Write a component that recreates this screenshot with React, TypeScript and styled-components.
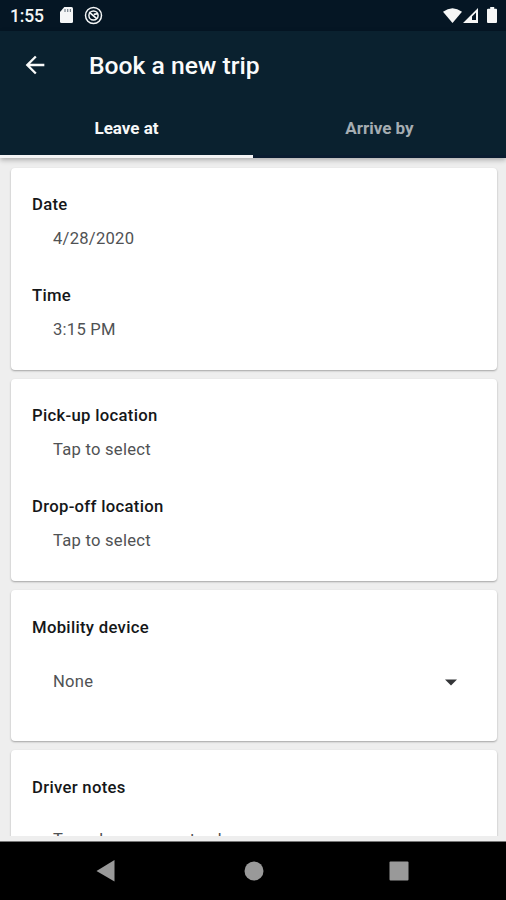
import React from "react";
import styled, { createGlobalStyle } from "styled-components";

const GlobalStyle = createGlobalStyle`
  * { box-sizing: border-box; }
  body { margin: 0; background: #eee; font-family: Roboto, sans-serif; }
`;
const Screen = styled.div`
  width: 506px;
  height: 900px;
  display: flex;
  flex-direction: column;
  overflow: hidden;
  background: #eeeeee;
`;
const StatusBar = styled.div`
  height: 31px;
  flex: none;
  display: flex;
  align-items: center;
  justify-content: space-between;
  padding: 0 8px 0 10px;
  background: #051624;
  color: #f4f6f7;
`;
const StatusGroup = styled.div`
  display: flex;
  align-items: center;
  gap: 10px;
`;
const Clock = styled.span`
  width: 39px;
  font-size: 17.5px;
  line-height: 31px;
  font-weight: 500;
  letter-spacing: -0.2px;
  padding-top: 1px;
`;
const Header = styled.header`
  height: 127px;
  flex: none;
  display: flex;
  flex-direction: column;
  background: #0a212f;
  box-shadow: 0 2px 5px rgba(0, 0, 0, 0.28);
  z-index: 1;
`;
const TitleBar = styled.div`
  height: 70px;
  display: flex;
  align-items: center;
  padding: 0 0 2px 21px;
`;
const BackButton = styled.button`
  display: flex;
  width: 68px;
  padding: 0;
  border: 0;
  background: none;
`;
const Title = styled.h1`
  margin: 0;
  padding-top: 1px;
  color: #fafbfb;
  font-size: 24.7px;
  line-height: 30px;
  font-weight: 500;
`;
const Tabs = styled.nav`
  flex: 1;
  display: flex;
`;
const Tab = styled.button<{ $active?: boolean }>`
  flex: 1;
  padding: 0;
  border: 0;
  border-bottom: 3px solid ${(p) => (p.$active ? "#f4f4f5" : "#0a1c30")};
  background: none;
  color: ${(p) => (p.$active ? "#f7f8f8" : "#a5adb2")};
  font: 700 17px/20px Roboto, sans-serif;
`;
const Content = styled.main`
  flex: 1;
  min-height: 0;
  margin-bottom: 5px;
  padding: 10px 9px 0 11px;
  display: flex;
  flex-direction: column;
  gap: 9px;
  overflow: hidden;
`;
const Card = styled.section<{ $height: number }>`
  height: ${(p) => p.$height}px;
  flex: none;
  padding: 25px 21px;
  border-radius: 4px;
  background: #fff;
  box-shadow: 0 1px 2px rgba(0, 0, 0, 0.32);
`;
const Field = styled.div`
  height: 91px;
`;
const Label = styled.div<{ $offset?: number }>`
  padding-top: ${(p) => p.$offset ?? 1}px;
  font-size: 16.7px;
  line-height: 22px;
  font-weight: 500;
  letter-spacing: 0.3px;
  color: #151719;
`;
const Value = styled.div<{ $gap?: number }>`
  display: flex;
  align-items: center;
  justify-content: space-between;
  margin-top: ${(p) => p.$gap ?? 12}px;
  padding: 0 19px 0 21px;
  font-size: 16.6px;
  line-height: 22px;
  letter-spacing: 0.25px;
  white-space: nowrap;
  color: #505254;
`;
const NavBar = styled.footer`
  height: 59px;
  flex: none;
  display: flex;
  align-items: center;
  justify-content: space-between;
  padding: 0 97px 0 96px;
  border-top: 1px solid #777;
  background: #000;
`;
const HomeButton = styled.span`
  display: flex;
  padding-left: 3px;
`;

const SdCard = () => (
  <svg width="15" height="17" viewBox="0 0 15 17">
    <path fill="#f4f6f7" d="M5.3 0h7.2Q14 0 14 1.5v13q0 1.5-1.5 1.5h-10Q1 16 1 14.5V5z" />
    <path stroke="#76818a" strokeWidth="1.2" d="M6 2v3M8.7 2v3M11.4 2v3" />
  </svg>
);
const NoSync = () => (
  <svg width="19" height="19" viewBox="0 0 19 19" fill="none" stroke="#f4f6f7">
    <circle cx="9.5" cy="9.5" r="8" strokeWidth="1.5" />
    <circle cx="9.5" cy="9.5" r="4.6" strokeWidth="1.5" />
    <path strokeWidth="1.7" d="M5.2 6.2l7.8 6.6M9.8 8.3l4.2-.6" />
  </svg>
);

export default function App() {
  return (
    <>
      <GlobalStyle />
      <Screen>
        <StatusBar>
          <StatusGroup>
            <Clock>1:55</Clock>
            <SdCard />
            <NoSync />
          </StatusGroup>
          <svg width="56" height="20" viewBox="0 0 56 20" fill="#f6f7f7">
            <path d="M1 5.8Q10.5-1.2 20 5.8L10.5 17z" />
            <path fillRule="evenodd" d="M21 17L36 2v15zM30 14h4V6.5l-4 4.1z" />
            <path d="M46.2 2.8h2V1h4v1.8h2Q55 2.8 55 3.8v12.3q0 1-1 1h-8q-1 0-1-1V3.8q0-1 1.2-1z" />
          </svg>
        </StatusBar>
        <Header>
          <TitleBar>
            <BackButton aria-label="Back">
              <svg width="28" height="28" viewBox="0 0 24 24" fill="#f8f9f9">
                <path d="M20 11H7.83l5.59-5.59L12 4l-8 8 8 8 1.41-1.41L7.83 13H20v-2z" />
              </svg>
            </BackButton>
            <Title>Book a new trip</Title>
          </TitleBar>
          <Tabs>
            <Tab $active>Leave at</Tab>
            <Tab>Arrive by</Tab>
          </Tabs>
        </Header>
        <Content>
          <Card $height={202}>
            <Field><Label>Date</Label><Value>4/28/2020</Value></Field>
            <Field><Label>Time</Label><Value>3:15 PM</Value></Field>
          </Card>
          <Card $height={202}>
            <Field><Label>Pick-up location</Label><Value>Tap to select</Value></Field>
            <Field><Label>Drop-off location</Label><Value>Tap to select</Value></Field>
          </Card>
          <Card $height={151}>
            <Label $offset={2}>Mobility device</Label>
            <Value $gap={32}>
              None
              <svg width="12" height="7" viewBox="0 0 12 7"><path fill="#343638" d="M0 .5h12L6 6.5z" /></svg>
            </Value>
          </Card>
          <Card $height={151}>
            <Label $offset={2}>Driver notes</Label>
            <Value $gap={30}>Type down any notes here</Value>
          </Card>
        </Content>
        <NavBar>
          <svg width="19" height="22" viewBox="0 0 19 22"><path fill="#999" d="M18.5 0v21.5L.5 11z" /></svg>
          <HomeButton><svg width="20" height="20" viewBox="0 0 20 20"><circle cx="10" cy="10" r="9.5" fill="#999" /></svg></HomeButton>
          <svg width="20" height="20" viewBox="0 0 20 20"><rect x=".5" y=".5" width="19" height="19" rx="1" fill="#999" /></svg>
        </NavBar>
      </Screen>
    </>
  );
}
